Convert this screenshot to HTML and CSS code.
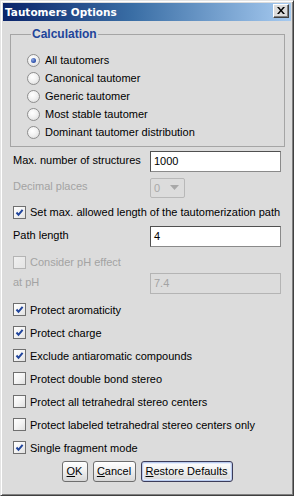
FILE: index.html
```html
<!DOCTYPE html>
<html>
<head>
<meta charset="utf-8">
<title>Tautomers Options</title>
<link rel="stylesheet" href="styles.css">
</head>
<body>
<div class="window">
  <div class="titlebar">
    <span class="title">Tautomers Options</span>
    <span class="close"><svg width="8" height="7" viewBox="0 0 8 7"><path d="M0 0h2l2 2.4L6 0h2L5 3.5 8 7H6L4 4.6 2 7H0l3-3.5z" fill="#000"/></svg></span>
  </div>
  <div class="content">
    <fieldset class="group">
      <legend class="group-title">Calculation</legend>
      <div class="radio-row"><span class="radio on"></span><span>All tautomers</span></div>
      <div class="radio-row"><span class="radio"></span><span>Canonical tautomer</span></div>
      <div class="radio-row"><span class="radio"></span><span>Generic tautomer</span></div>
      <div class="radio-row"><span class="radio"></span><span>Most stable tautomer</span></div>
      <div class="radio-row"><span class="radio"></span><span>Dominant tautomer distribution</span></div>
    </fieldset>

    <div class="field-row first">
      <span class="label">Max. number of structures</span>
      <span class="input">1000</span>
    </div>
    <div class="field-row disabled gap5">
      <span class="label">Decimal places</span>
      <span class="combo"><span class="combo-value">0</span><svg class="combo-arrow" width="9" height="5" viewBox="0 0 9 5"><path d="M0 0h9L4.5 5z" fill="#a8a8a8"/></svg></span>
    </div>
    <div class="check-row single gap5">
      <span class="check on"><svg width="11" height="11" viewBox="0 0 11 11"><path d="M2.5 5.5 4.5 7.8 8.6 2.8" fill="none" stroke="#21459c" stroke-width="2"/></svg></span>
      <span>Set max. allowed length of the tautomerization path</span>
    </div>
    <div class="field-row gap5">
      <span class="label">Path length</span>
      <span class="input">4</span>
    </div>
    <div class="check-row single disabled gap6">
      <span class="check"></span>
      <span>Consider pH effect</span>
    </div>
    <div class="field-row disabled gap2">
      <span class="label">at pH</span>
      <span class="input">7.4</span>
    </div>

    <div class="check-list">
      <div class="check-row"><span class="check on"><svg width="11" height="11" viewBox="0 0 11 11"><path d="M2.5 5.5 4.5 7.8 8.6 2.8" fill="none" stroke="#21459c" stroke-width="2"/></svg></span><span>Protect aromaticity</span></div>
      <div class="check-row"><span class="check on"><svg width="11" height="11" viewBox="0 0 11 11"><path d="M2.5 5.5 4.5 7.8 8.6 2.8" fill="none" stroke="#21459c" stroke-width="2"/></svg></span><span>Protect charge</span></div>
      <div class="check-row"><span class="check on"><svg width="11" height="11" viewBox="0 0 11 11"><path d="M2.5 5.5 4.5 7.8 8.6 2.8" fill="none" stroke="#21459c" stroke-width="2"/></svg></span><span>Exclude antiaromatic compounds</span></div>
      <div class="check-row"><span class="check"></span><span>Protect double bond stereo</span></div>
      <div class="check-row"><span class="check"></span><span>Protect all tetrahedral stereo centers</span></div>
      <div class="check-row"><span class="check"></span><span>Protect labeled tetrahedral stereo centers only</span></div>
      <div class="check-row"><span class="check on"><svg width="11" height="11" viewBox="0 0 11 11"><path d="M2.5 5.5 4.5 7.8 8.6 2.8" fill="none" stroke="#21459c" stroke-width="2"/></svg></span><span>Single fragment mode</span></div>
    </div>

    <div class="buttons">
      <span class="btn btn-ok"><u>O</u>K</span>
      <span class="btn btn-cancel"><u>C</u>ancel</span>
      <span class="btn btn-default"><u>R</u>estore Defaults</span>
    </div>
  </div>
</div>
</body>
</html>
```

FILE: styles.css
```css
html, body {
  margin: 0;
  padding: 0;
  background: #dcdcdc;
}

body {
  font-family: "Liberation Sans", Arial, sans-serif;
  font-size: 11px;
  color: #000;
}

.window {
  width: 294px;
  height: 496px;
  box-sizing: border-box;
  border: 1px solid;
  border-color: #e4e4e4 #404040 #404040 #e4e4e4;
  padding: 2px 2px 0 2px;
  box-shadow: inset 1px 1px 0 #ffffff, inset -1px -1px 0 #808080;
  background: #dcdcdc;
  display: flex;
  flex-direction: column;
}

.titlebar {
  height: 18px;
  flex: none;
  display: flex;
  align-items: flex-start;
  justify-content: space-between;
  background: linear-gradient(to right, #0a246a 0%, #3a6ea5 45%, #a6caf0 100%);
  padding-left: 2px;
}

.title {
  color: #fff;
  font-family: "DejaVu Sans", Verdana, sans-serif;
  font-weight: bold;
  font-size: 10.5px;
  line-height: 18px;
}

.close {
  width: 16px;
  height: 14px;
  box-sizing: border-box;
  margin: 1px 2px 0 0;
  background: #dcdcdc;
  border: 1px solid;
  border-color: #ffffff #404040 #404040 #ffffff;
  box-shadow: inset -1px -1px 0 #808080;
  display: flex;
  align-items: center;
  justify-content: center;
}

.close svg {
  display: block;
  margin: 0 1px 1px 0;
}

.content {
  flex: 1;
  display: flex;
  flex-direction: column;
  padding: 6px 6px 0 7px;
}

.group {
  margin: 0;
  padding: 10px 0 5px 16px;
  border: 1px solid #a5a5a5;
  min-width: 0;
}

.group-title {
  margin-left: 4px;
  padding: 0 1px;
  font-weight: bold;
  font-size: 12px;
  line-height: 14px;
  color: #22449a;
}

.radio-row {
  height: 18px;
  display: flex;
  align-items: center;
  gap: 5px;
}

.radio {
  width: 13px;
  height: 13px;
  box-sizing: border-box;
  border-radius: 50%;
  border: 1px solid #8e8e8e;
  background: radial-gradient(circle at 40% 35%, #ffffff 0%, #f2f2f2 45%, #d6d6d6 100%);
  display: flex;
  align-items: center;
  justify-content: center;
}

.radio.on::after {
  content: "";
  width: 5px;
  height: 5px;
  border-radius: 50%;
  background: radial-gradient(circle at 35% 35%, #8fa8e0 0%, #3457b0 60%, #1e3c8f 100%);
}

.field-row {
  height: 21px;
  display: flex;
  align-items: center;
  justify-content: space-between;
  margin-left: 3px;
  margin-right: 4px;
}

.field-row.first { margin-top: 4px; }
.gap2 { margin-top: 2px; }
.gap5 { margin-top: 5px; }
.gap6 { margin-top: 6px; }

.label {
  margin-top: -3px;
}

.input {
  width: 131px;
  height: 21px;
  box-sizing: border-box;
  border: 1px solid;
  border-color: #505050 #8a8a8a #8a8a8a #505050;
  background: #fff;
  padding: 0 3px;
  line-height: 19px;
}

.disabled {
  color: #a3a3a3;
}

.disabled .input {
  background: transparent;
  border-color: #b4b4b4;
  color: #a3a3a3;
}

.combo {
  width: 35px;
  height: 20px;
  box-sizing: border-box;
  border: 1px solid #b8b8b8;
  border-radius: 2px;
  margin-right: 96px;
  display: flex;
  align-items: center;
  justify-content: space-between;
  padding: 0 5px 0 3px;
  color: #a8a8a8;
}

.combo-arrow {
  display: block;
}

.check-row {
  height: 23px;
  display: flex;
  align-items: center;
  gap: 4px;
  margin-left: 3px;
}

.check-row.single {
  height: 18px;
}

.check {
  width: 13px;
  height: 13px;
  box-sizing: border-box;
  border: 1px solid #6f6f6f;
  background: linear-gradient(135deg, #ffffff 0%, #f4f4f4 50%, #e0e0e0 100%);
  display: flex;
  align-items: center;
  justify-content: center;
  flex: none;
}

.check svg {
  display: block;
}

.disabled .check {
  border-color: #b4b4b4;
  background: linear-gradient(135deg, #f0f0f0 0%, #e4e4e4 100%);
}

.check-list {
  margin-top: 4px;
  display: flex;
  flex-direction: column;
}

.buttons {
  margin-top: 2px;
  display: flex;
  justify-content: center;
  gap: 5px;
  padding-right: 1px;
}

.btn {
  height: 21px;
  box-sizing: border-box;
  border: 1px solid #6e6e6e;
  border-radius: 3px;
  background: linear-gradient(to bottom, #ffffff 0%, #f0f0f0 45%, #d6d6d6 100%);
  padding: 0 5px;
  line-height: 19px;
  text-align: center;
}

.btn u {
  text-underline-offset: 1px;
}

.btn-ok { width: 26px; padding: 0; }
.btn-cancel { width: 43px; padding: 0; }
.btn-default {
  width: 92px;
  padding: 0;
  border-color: #3c3c5a;
  box-shadow: inset 0 0 0 1px #b9cbef, inset 0 0 0 2px #e6ecfa;
}
```
